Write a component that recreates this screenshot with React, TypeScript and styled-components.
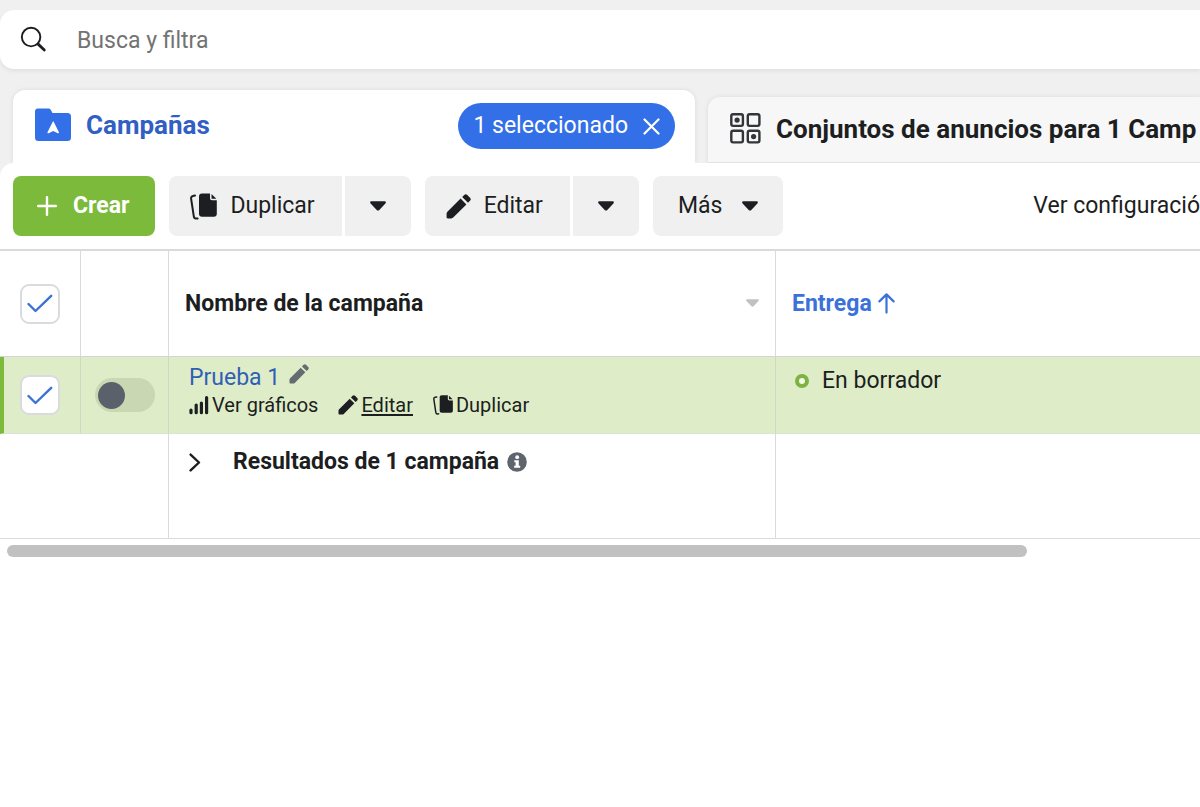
import React, { useState } from "react";
import styled, { createGlobalStyle } from "styled-components";

const GlobalStyle = createGlobalStyle`
  * { box-sizing: border-box; }
  body {
    margin: 0;
    background: #fff;
    color: #1c1e21;
    font-family: Roboto, "Liberation Sans", sans-serif;
    font-size: 23px;
    line-height: 28px;
    overflow-x: hidden;
  }
  button, input { font: inherit; color: inherit; }
  button { border: 0; background: none; padding: 0; cursor: pointer; }
  a { color: inherit; text-decoration: none; }
  svg { display: block; flex: none; }
`;

/* ---------- icons ---------- */

const SearchIcon = () => (
  <svg width="27" height="27" viewBox="0 0 28 28" fill="none" stroke="#1c1e21" strokeLinecap="round">
    <circle cx="11.5" cy="11.5" r="9.6" strokeWidth="2" />
    <path d="M18.8 18.8 25.2 25" strokeWidth="2.9" />
  </svg>
);

const FolderIcon = () => (
  <svg width="38" height="34" viewBox="0 0 38 34">
    <path d="M4 .5h10.5c1 0 1.700.4 2.200 1.200L18.500 5H33.500a3.500 3.500 0 0 1 3.500 3.500V29.500a3.500 3.500 0 0 1-3.500 3.500H4.500A3.500 3.500 0 0 1 1 29.500V3.500A3 3 0 0 1 4 .5Z" fill="#3370e8" />
    <path d="M18.600 14c.3-.6.9-.6 1.200 0l5 10c.4.9-.2 1.500-1 1.200l-4.600-2.200-4.600 2.200c-.8.3-1.400-.3-1-1.200Z" fill="#fff" />
  </svg>
);

const GridIcon = () => (
  <svg width="31" height="31" viewBox="0 0 31 31" fill="none" stroke="#333538" strokeWidth="2.400">
    <rect x="1.300" y="1.300" width="11.600" height="11.600" rx="1.800" />
    <rect x="17.800" y="1.300" width="11.600" height="11.600" rx="1.800" />
    <rect x="1.300" y="17.800" width="11.600" height="11.600" rx="1.800" />
    <rect x="17.800" y="17.800" width="11.600" height="11.600" rx="1.800" />
    <circle cx="7.100" cy="7.100" r="2.600" fill="#333538" stroke="none" />
    <circle cx="23.600" cy="23.600" r="2.600" fill="#333538" stroke="none" />
  </svg>
);

const CloseIcon = () => (
  <svg width="17" height="17" viewBox="0 0 17 17" stroke="#fff" strokeWidth="2.200" strokeLinecap="round">
    <path d="M1.500 1.500l14 14M15.500 1.500l-14 14" />
  </svg>
);

const PlusIcon = () => (
  <svg width="20" height="20" viewBox="0 0 20 20" stroke="#fff" strokeWidth="2.400" strokeLinecap="round">
    <path d="M10 1.200v17.600M1.200 10h17.600" />
  </svg>
);

const CopyIcon = ({ size = 27 }: { size?: number }) => (
  <svg width={size} height={size} viewBox="0 0 27 27">
    <path d="M5 2.600 2.900 3C1.500 3.300.9 4.200 1.100 5.600L3.800 23.400c.2 1.500 1 2.200 2.400 2.100l1.400-.1" fill="none" stroke="#1c1e21" strokeWidth="2" strokeLinecap="round" />
    <path d="M12 .5H20v4.600c0 1.500.7 2.200 2.200 2.200H26.800V20.800c0 2-1 3-3 3H12c-2 0-3-1-3-3V3.500c0-2 1-3 3-3Z" fill="#1c1e21" />
    <path d="M21.500.9 26.400 5.800H22.400c-.6 0-.9-.3-.9-.9Z" fill="#1c1e21" />
  </svg>
);

const PencilIcon = ({ size = 25, color = "#1c1e21" }: { size?: number; color?: string }) => (
  <svg width={size} height={size} viewBox="0 0 25 25" fill={color}>
    <path d="M14.600 4.600 20.400 10.400 7.200 23.600c-.5.5-1.200.8-1.900.8H1.800C1 24.400.6 24 .6 23.200V19.700c0-.7.3-1.400.8-1.900Z" />
    <path d="M16.200 3 18.200 1c1-1 2.100-1 3.100 0l2.700 2.700c1 1 1 2.100 0 3.100l-2 2Z" />
  </svg>
);

const CaretIcon = ({ width = 16, color = "#1c1e21" }: { width?: number; color?: string }) => (
  <svg width={width} height={width * 0.625} viewBox="0 0 16 10" fill={color}>
    <path d="M1.500.3h13c1.300 0 1.800 1.300.9 2.200L9.300 9c-.8.8-1.800.8-2.600 0L.6 2.500C-.3 1.600.2.3 1.500.3Z" />
  </svg>
);

const CheckIcon = () => (
  <svg width="26" height="19" viewBox="0 0 26 19" fill="none" stroke="#3b72d4" strokeWidth="2.400" strokeLinecap="round" strokeLinejoin="round">
    <path d="M1.500 10 8.500 17 24.200 1.800" />
  </svg>
);

const ArrowUpIcon = () => (
  <svg width="17" height="21" viewBox="0 0 17 21" fill="none" stroke="#3b72d9" strokeWidth="2.200" strokeLinecap="round" strokeLinejoin="round">
    <path d="M8.500 19.600V1.400M1.400 8.400l7.100-7 7.100 7" />
  </svg>
);

const BarsIcon = () => (
  <svg width="20" height="20" viewBox="0 0 20 20" stroke="#1c1e21" strokeWidth="3.200" strokeLinecap="round">
    <path d="M2 15v2.700M7.200 10v7.700M12.400 8v9.700M17.600 2.500v15.200" />
  </svg>
);

const ChevronIcon = () => (
  <svg width="12" height="19" viewBox="0 0 12 19" fill="none" stroke="#1c1e21" strokeWidth="2.400" strokeLinecap="round" strokeLinejoin="round">
    <path d="M1.600 1.600 10 9.500l-8.400 7.900" />
  </svg>
);

const InfoIcon = () => (
  <svg width="20" height="20" viewBox="0 0 20 20">
    <circle cx="10" cy="10" r="9.800" fill="#5f656d" />
    <circle cx="10.200" cy="5.200" r="1.900" fill="#fff" />
    <path d="M7.300 8.200h4.500v5.600h1.400v2H7.100v-2h1.500v-3.600H7.300Z" fill="#fff" />
  </svg>
);

/* ---------- header ---------- */

const Header = styled.header`
  background: #f0f0f0;
  padding-top: 10px;
`;

const SearchBar = styled.label`
  display: flex;
  align-items: center;
  gap: 30px;
  height: 59px;
  padding-left: 20px;
  background: #fff;
  border-radius: 14px 0 0 14px;
  box-shadow: 0 2px 4px rgba(0, 0, 0, 0.07);
`;

const SearchInput = styled.input`
  flex: 1;
  min-width: 0;
  border: 0;
  padding: 2px 0 0;
  outline: 0;
  background: none;
  &::placeholder { color: #737373; opacity: 1; }
`;

const Tabs = styled.nav`
  display: grid;
  grid-template-columns: 682px minmax(0, 1fr);
  align-items: end;
  gap: 13px;
  padding: 21px 0 0 13px;
  overflow: hidden;
`;

const Tab = styled.div<{ $active?: boolean }>`
  display: flex;
  align-items: center;
  justify-content: space-between;
  height: ${(p) => (p.$active ? 73 : 66)}px;
  padding: ${(p) => (p.$active ? "0 20px 0 21px" : "0 0 0 22px")};
  background: ${(p) => (p.$active ? "#fff" : "#f7f7f7")};
  border-radius: ${(p) => (p.$active ? "12px 12px 0 0" : "12px 0 0 0")};
  border-bottom: 1px solid ${(p) => (p.$active ? "#fff" : "#e2e2e2")};
  box-shadow: 0 0 5px rgba(0, 0, 0, 0.09);
`;

const TabLink = styled.a<{ $active?: boolean }>`
  display: flex;
  align-items: center;
  gap: ${(p) => (p.$active ? 14 : 15)}px;
  padding-bottom: 2px;
  color: ${(p) => (p.$active ? "#315fc4" : "#1c1e21")};
  font-size: 26px;
  font-weight: 700;
  white-space: nowrap;
`;

const Pill = styled.button`
  display: flex;
  align-items: center;
  gap: 15px;
  height: 46px;
  padding: 0 15px;
  border-radius: 23px;
  background: #3370e8;
  color: #fff;
`;

/* ---------- toolbar ---------- */

const Panel = styled.main`
  background: #fff;
`;

const Toolbar = styled.div`
  display: flex;
  align-items: center;
  gap: 14px;
  height: 86px;
  padding-left: 13px;
  background: #fff;
  border-radius: 14px 0 0 0;
`;

const Split = styled.div`
  display: flex;
  gap: 3px;
`;

const toolPadding = { primary: "0 26px 0 24px", left: "0 27px 0 21px", plain: "0 25px" };

const ToolButton = styled.button<{ $primary?: boolean; $side?: "left" | "right"; $gap?: number }>`
  display: flex;
  align-items: center;
  justify-content: center;
  gap: ${(p) => p.$gap ?? 13}px;
  height: 60px;
  padding: ${(p) => (p.$primary ? toolPadding.primary : p.$side === "left" ? toolPadding.left : toolPadding.plain)};
  border-radius: ${(p) => (p.$side === "left" ? "8px 0 0 8px" : p.$side === "right" ? "0 8px 8px 0" : "8px")};
  background: ${(p) => (p.$primary ? "#7cba3c" : "#f0f0f0")};
  color: ${(p) => (p.$primary ? "#fff" : "#1c1e21")};
  font-weight: ${(p) => (p.$primary ? 700 : 400)};
  white-space: nowrap;
`;

const ViewLink = styled.a`
  margin-left: auto;
  white-space: nowrap;
`;

/* ---------- table ---------- */

const Table = styled.table`
  width: 100%;
  table-layout: fixed;
  border-collapse: separate;
  border-spacing: 0;
  border-top: 2px solid #d9dadc;
`;

const Col = styled.col<{ $w?: number }>`
  width: ${(p) => (p.$w ? `${p.$w}px` : "auto")};
`;

const HeadCell = styled.th`
  height: 106px;
  padding: 0 16px;
  border-bottom: 1px solid #d3d4d6;
  text-align: left;
  font-weight: 700;
  &:not(:last-child) { border-right: 1px solid #d9dadc; }
  &:first-child { padding: 0 20px; }
`;

const BodyRow = styled.tr`
  background: #deedc8;
  & > td { height: 77px; vertical-align: top; border-bottom: 1px solid #dbe3d2; }
  & > td:not(:last-child) { border-right: 1px solid #cfd8c3; }
  & > td:first-child { border-left: 4px solid #7cba3c; }
`;

const FootRow = styled.tr`
  & > td { height: 105px; vertical-align: top; border-bottom: 1px solid #dcdddf; }
  & > td:not(:last-child) { border-right: 1px solid #d9dadc; }
`;

const Cell = styled.td<{ $pad?: string }>`
  padding: ${(p) => p.$pad ?? "0"};
`;

const HeadLine = styled.div`
  display: flex;
  align-items: center;
  justify-content: space-between;
`;

const SortButton = styled.button`
  display: flex;
  align-items: center;
  gap: 6px;
  color: #3b72d9;
  font-weight: 700;
`;

const CheckLabel = styled.label`
  display: grid;
  width: 40px;
  place-items: center;
  cursor: pointer;
  & > * { grid-area: 1 / 1; }
`;

const CheckInput = styled.input`
  appearance: none;
  width: 40px;
  height: 40px;
  margin: 0;
  border: 2px solid #d9dbde;
  border-radius: 9px;
  background: #fff;
  & + svg { visibility: hidden; pointer-events: none; }
  &:checked + svg { visibility: visible; }
`;

const Switch = styled.input`
  appearance: none;
  display: flex;
  align-items: center;
  width: 60px;
  height: 34px;
  margin: 0;
  padding: 0 3px;
  border-radius: 17px;
  background: #c9d8b3;
  cursor: pointer;
  &::before {
    content: "";
    width: 27px;
    height: 27px;
    border-radius: 50%;
    background: #5a616b;
  }
  &:checked { justify-content: flex-end; }
`;

const NameLine = styled.div`
  display: flex;
  align-items: flex-start;
  gap: 9px;
  color: #315fb8;
`;

const Actions = styled.div`
  display: flex;
  gap: 20px;
  font-size: 20px;
  line-height: 26px;
`;

const Action = styled.a<{ $underline?: boolean }>`
  display: flex;
  align-items: center;
  gap: 3px;
  & > span { text-decoration: ${(p) => (p.$underline ? "underline" : "none")}; text-underline-offset: 2px; }
`;

const Status = styled.div`
  display: flex;
  align-items: center;
  gap: 13px;
`;

const Ring = styled.span`
  width: 14px;
  height: 14px;
  border: 4px solid #7cb342;
  border-radius: 50%;
  background: #f2f9e8;
`;

const Results = styled.div`
  display: flex;
  align-items: center;
  font-weight: 700;
  & > button { margin-right: 32px; }
  & > svg { margin-left: 8px; }
`;

const ScrollTrack = styled.div`
  padding: 6px 7px;
`;

const ScrollThumb = styled.div`
  width: 86%;
  height: 12px;
  border-radius: 6px;
  background: #c1c1c1;
`;

function Check({ label }: { label: string }) {
  const [on, setOn] = useState(true);
  return (
    <CheckLabel>
      <CheckInput type="checkbox" aria-label={label} checked={on} onChange={() => setOn(!on)} />
      <CheckIcon />
    </CheckLabel>
  );
}

function SplitButton({ icon, text }: { icon: React.ReactNode; text: string }) {
  return (
    <Split>
      <ToolButton $side="left">{icon}{text}</ToolButton>
      <ToolButton $side="right" aria-label={text}><CaretIcon /></ToolButton>
    </Split>
  );
}

export default function App() {
  return (
    <>
      <GlobalStyle />
      <Header>
        <SearchBar>
          <SearchIcon />
          <SearchInput type="text" placeholder="Busca y filtra" />
        </SearchBar>
        <Tabs>
          <Tab $active>
            <TabLink $active href="#campaigns"><FolderIcon />Campañas</TabLink>
            <Pill>1 seleccionado<CloseIcon /></Pill>
          </Tab>
          <Tab>
            <TabLink href="#adsets"><GridIcon />Conjuntos de anuncios para 1 Camp</TabLink>
          </Tab>
        </Tabs>
        <Toolbar>
          <ToolButton $primary $gap={16}><PlusIcon />Crear</ToolButton>
          <SplitButton icon={<CopyIcon />} text="Duplicar" />
          <SplitButton icon={<PencilIcon />} text="Editar" />
          <ToolButton $gap={20}>Más<CaretIcon /></ToolButton>
          <ViewLink href="#view">Ver configuració</ViewLink>
        </Toolbar>
      </Header>
      <Panel>
        <Table>
          <colgroup>
            <Col $w={81} />
            <Col $w={88} />
            <Col $w={607} />
            <Col />
          </colgroup>
          <thead>
            <tr>
              <HeadCell><Check label="Todas" /></HeadCell>
              <HeadCell />
              <HeadCell>
                <HeadLine>Nombre de la campaña<CaretIcon width={13} color="#bfc1c4" /></HeadLine>
              </HeadCell>
              <HeadCell><SortButton>Entrega<ArrowUpIcon /></SortButton></HeadCell>
            </tr>
          </thead>
          <tbody>
            <BodyRow>
              <Cell $pad="18px 0 0 16px"><Check label="Prueba 1" /></Cell>
              <Cell $pad="21px 0 0 14px"><Switch type="checkbox" role="switch" aria-label="Prueba 1" /></Cell>
              <Cell $pad="7px 0 0 20px">
                <NameLine>
                  <a href="#prueba">Prueba 1</a>
                  <PencilIcon size={20} color="#666b70" />
                </NameLine>
                <Actions>
                  <Action href="#charts"><BarsIcon /><span>Ver gráficos</span></Action>
                  <Action href="#edit" $underline><PencilIcon size={20} /><span>Editar</span></Action>
                  <Action href="#duplicate"><CopyIcon size={20} /><span>Duplicar</span></Action>
                </Actions>
              </Cell>
              <Cell $pad="10px 0 0 19px"><Status><Ring />En borrador</Status></Cell>
            </BodyRow>
            <FootRow>
              <Cell colSpan={2} />
              <Cell $pad="14px 0 0 20px">
                <Results>
                  <button aria-label="Resultados"><ChevronIcon /></button>
                  Resultados de 1 campaña
                  <InfoIcon />
                </Results>
              </Cell>
              <Cell />
            </FootRow>
          </tbody>
        </Table>
        <ScrollTrack><ScrollThumb /></ScrollTrack>
      </Panel>
    </>
  );
}
